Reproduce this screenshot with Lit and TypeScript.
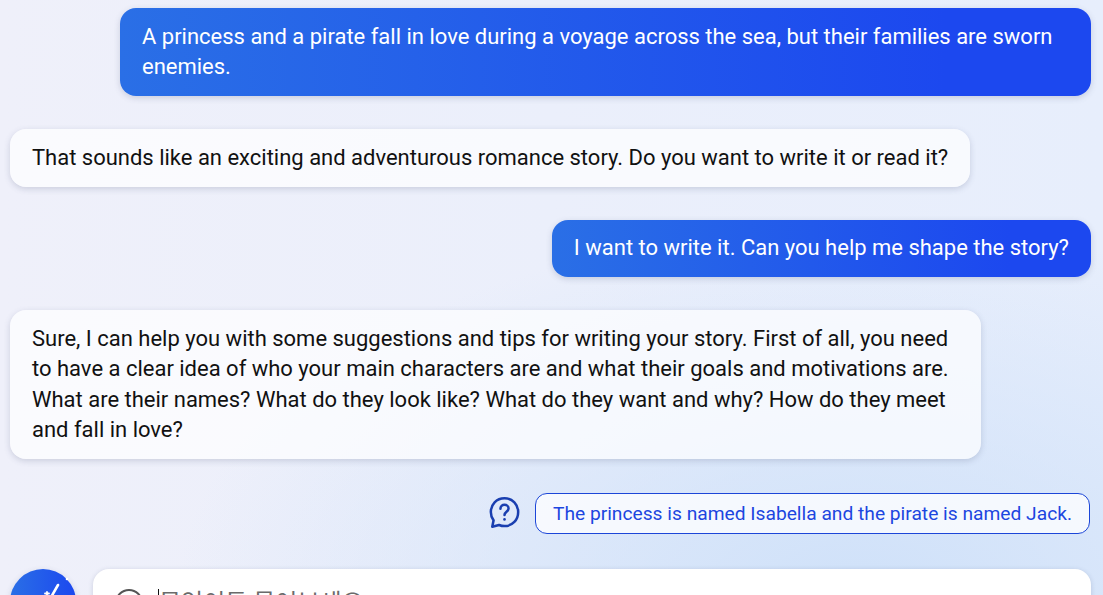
import { LitElement, html, css } from "lit";
import { customElement } from "lit/decorators.js";

@customElement("app-root")
export class AppRoot extends LitElement {
  static styles = css`
    :host {
      display: block;
      width: 1103px;
      height: 595px;
      overflow: hidden;
      font-family: Roboto, "Noto Sans CJK KR", sans-serif;
      background:
        radial-gradient(ellipse 62% 62% at 78% 100%, #cfe1f9 0%, rgba(207, 225, 249, 0) 100%),
        linear-gradient(90deg, #eff0fa 0%, #e7eefc 100%);
    }
    .page {
      box-sizing: border-box;
      height: 595px;
      padding: 8px 12px 0 10px;
      display: flex;
      flex-direction: column;
    }
    .bubble {
      box-sizing: border-box;
      max-width: 971px;
      padding: 13.85px 22px 13.65px;
      font-size: 21.99px;
      line-height: 30.3px;
      border-radius: 16px;
      box-shadow: 0 2px 6px rgba(60, 70, 110, 0.2);
      margin-bottom: 32.85px;
    }
    .user {
      align-self: flex-end;
      color: #fff;
      background: linear-gradient(90deg, #2a6fe6 0%, #1c48ef 85%);
    }
    .bot {
      align-self: flex-start;
      color: #111;
      background: rgba(255, 255, 255, 0.7);
    }
    .suggest {
      display: flex;
      justify-content: flex-end;
      align-items: center;
      gap: 13px;
      margin: 1.2px 1px 0 0;
    }
    .help { width: 35px; height: 35px; display: block; margin-top: -2px; }
    .chip {
      box-sizing: border-box;
      height: 41px;
      padding: 0 17px 0 16.5px;
      display: flex;
      align-items: center;
      border: 1px solid #1c46d8;
      border-radius: 12px;
      background: rgba(255, 255, 255, 0.75);
      color: #1c46e0;
      font-size: 19.22px;
    }
    .composer {
      display: flex;
      gap: 17px;
      margin-top: 35px;
      align-items: flex-start;
    }
    .fab {
      flex: none;
      width: 66px;
      height: 66px;
      border-radius: 50%;
      background: linear-gradient(90deg, #2a6fe6, #1c48ef);
      display: flex;
      justify-content: center;
      box-shadow: 0 2px 6px rgba(60, 70, 110, 0.2);
    }
    .fab svg { width: 66px; height: 66px; display: block; }
    .input {
      flex: 1;
      height: 80px;
      background: #fff;
      border-radius: 16px;
      box-shadow: 0 1px 5px rgba(60, 70, 110, 0.2);
      display: flex;
      align-items: flex-start;
      gap: 14px;
      padding: 19px 0 0 21px;
      box-sizing: border-box;
    }
    .plus { width: 30px; height: 30px; flex: none; display: block; }
    .ph {
      font-size: 24px;
      line-height: 28px;
      margin-top: 1px;
      color: #6b6b6b;
      border-left: 1px solid #111;
      white-space: nowrap;
    }
  `;

  render() {
    return html`<div class="page">
      <div class="bubble user">A princess and a pirate fall in love during a voyage across the sea, but their families are sworn enemies.</div>
      <div class="bubble bot">That sounds like an exciting and adventurous romance story. Do you want to write it or read it?</div>
      <div class="bubble user">I want to write it. Can you help me shape the story?</div>
      <div class="bubble bot">Sure, I can help you with some suggestions and tips for writing your story. First of all, you need to have a clear idea of who your main characters are and what their goals and motivations are. What are their names? What do they look like? What do they want and why? How do they meet and fall in love?</div>
      <div class="suggest">
        <svg class="help" viewBox="0 0 32 32" fill="none" stroke="#1a3fb0" stroke-width="2.3" stroke-linejoin="round" stroke-linecap="round">
          <path d="M16 3C8.600 3 3.500 8.600 3.500 15.500c0 3 .9 5.600 2.500 7.700L4.800 29l6.200-1.600c1.500.6 3.200 1 5 1 7.400 0 12.500-5.700 12.500-12.900C28.500 8.600 23.400 3 16 3z" />
          <path d="M12.300 12.500c0-2 1.600-3.500 3.700-3.500s3.700 1.400 3.700 3.300c0 3-3.700 3.100-3.700 6" />
          <circle cx="16" cy="22.300" r="1.200" fill="#1a3fb0" stroke="none" />
        </svg>
        <div class="chip">The princess is named Isabella and the pirate is named Jack.</div>
      </div>
      <div class="composer">
        <div class="fab">
          <svg viewBox="0 0 66 66" fill="none" stroke="#fff" stroke-width="2.6" stroke-linecap="round">
            <path d="M48 16L40 30" />
            <path d="M35 24.500h4M37 23v4" stroke-width="1.800" />
            <circle cx="57" cy="10" r="1.300" fill="#fff" stroke="none" />
          </svg>
        </div>
        <div class="input">
          <svg class="plus" viewBox="0 0 30 30" fill="none" stroke="#555" stroke-width="2"><circle cx="15" cy="15" r="13" /></svg>
          <div class="ph">무엇이든 물어보세요</div>
        </div>
      </div>
    </div>`;
  }
}
